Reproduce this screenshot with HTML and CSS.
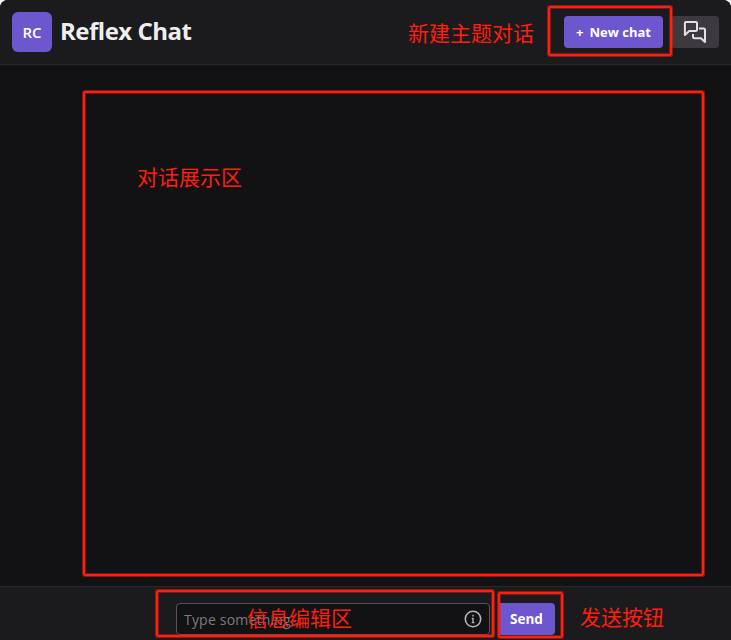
FILE: index.html
```html
<!DOCTYPE html>
<html lang="zh-CN">
<head>
<meta charset="utf-8">
<title>Reflex Chat</title>
<link rel="stylesheet" href="styles.css">
</head>
<body>
<div class="app">
  <header class="navbar">
    <div class="avatar">RC</div>
    <h1 class="title">Reflex Chat</h1>
    <div class="actions">
      <button class="btn new-chat"><span class="plus">+</span>New chat</button>
      <button class="btn chats" aria-label="Chats">
        <svg width="24" height="24" viewBox="0 0 24 24" fill="none" stroke="#e4e2e6" stroke-width="2" stroke-linejoin="round">
          <path d="M1.900 15V3.200Q1.900 1.900 3.200 1.900H12.700Q14 1.900 14 3.200V9.700Q14 11 12.700 11H6.200Z"/>
          <path d="M16 8.500H20.700Q22 8.500 22 9.800V22L18 18.300H11.300Q10 18.300 10 17V14"/>
        </svg>
      </button>
    </div>
  </header>
  <main class="conversation"></main>
  <footer class="composer">
    <div class="input">
      <span class="placeholder">Type something...</span>
      <svg width="18" height="18" viewBox="0 0 18 18" fill="none" stroke="#b5b2bc">
        <circle cx="9" cy="9" r="7.700" stroke-width="1.600"/>
        <path d="M9 4.800V6.400M7.800 8.400H9V12.800M7.700 12.600H10.300" stroke-width="1.400"/>
      </svg>
    </div>
    <button class="btn send">Send</button>
  </footer>
  <div class="mark mark-new"></div>
  <div class="mark mark-main"></div>
  <div class="mark mark-input"></div>
  <div class="mark mark-send"></div>
  <div class="note note-new">新建主题对话</div>
  <div class="note note-main">对话展示区</div>
  <div class="note note-input">信息编辑区</div>
  <div class="note note-send">发送按钮</div>
</div>
</body>
</html>
```
FILE: styles.css
```css
* { box-sizing: border-box; }
body {
  margin: 0;
  background: #f4f4f4;
  font-family: "Open Sans", "Noto Sans", sans-serif;
}
.app {
  position: relative;
  display: flex;
  flex-direction: column;
  height: 640px;
  overflow: hidden;
  background: #121214;
  border-radius: 8px 8px 0 0;
}
.navbar {
  display: flex;
  align-items: center;
  height: 65px;
  padding: 0 12px;
  background: #1b1b1d;
  border-bottom: 1px solid #29292c;
}
.avatar {
  display: flex;
  align-items: center;
  justify-content: center;
  width: 40px;
  height: 40px;
  padding-bottom: 1px;
  border-radius: 6px;
  background: #6e56cf;
  color: #fff;
  font-size: 15px;
  font-weight: 600;
}
.title {
  margin: 0 0 2px 8px;
  color: #eeeef0;
  font-size: 24px;
  line-height: 30px;
  font-weight: 700;
  letter-spacing: -0.5px;
  white-space: nowrap;
}
.actions { display: flex; gap: 8px; margin-left: auto; }
.btn {
  display: flex;
  align-items: center;
  justify-content: center;
  height: 32px;
  padding: 0;
  border: 0;
  border-radius: 4px;
  background: #6e56cf;
  color: #fff;
  font-family: inherit;
  font-size: 13.5px;
  font-weight: 700;
  white-space: nowrap;
}
.new-chat { width: 99px; font-size: 13px; }
.plus { margin-right: 6px; }
.chats { width: 48px; background: #3c393f; }
.conversation { flex: 1; }
.composer {
  display: flex;
  justify-content: center;
  gap: 8px;
  height: 54px;
  padding-top: 16px;
  background: #1b1b1d;
  border-top: 1px solid #29292c;
}
.input {
  display: flex;
  align-items: center;
  justify-content: space-between;
  width: 314px;
  height: 32px;
  padding: 0 7px;
  border: 1px solid #55535b;
  border-radius: 4px;
  background: #121214;
}
.placeholder {
  color: #7c7a83;
  font-size: 14px;
  letter-spacing: 0.2px;
}
.send { width: 57px; }
.mark {
  position: absolute;
  border: 2px solid #ff1e10;
  border-radius: 2px;
  box-shadow: 0 0 0 1px #ff1e1080, inset 0 0 0 1px #ff1e1066;
}
.mark-new { left: 548px; top: 6px; width: 124px; height: 50px; }
.mark-main { left: 83px; top: 91px; width: 621px; height: 485px; }
.mark-input { left: 156px; top: 590px; width: 338px; height: 47px; }
.mark-send { left: 498px; top: 592px; width: 65px; height: 46px; }
.note {
  position: absolute;
  color: #ff1e10;
  font-family: "Noto Sans CJK SC", sans-serif;
  font-size: 21px;
  font-weight: 400;
  line-height: 30px;
  white-space: nowrap;
}
.note-new { left: 408px; top: 17px; }
.note-main { left: 137px; top: 161px; }
.note-input { left: 247px; top: 602px; }
.note-send { left: 580px; top: 601px; }
```
